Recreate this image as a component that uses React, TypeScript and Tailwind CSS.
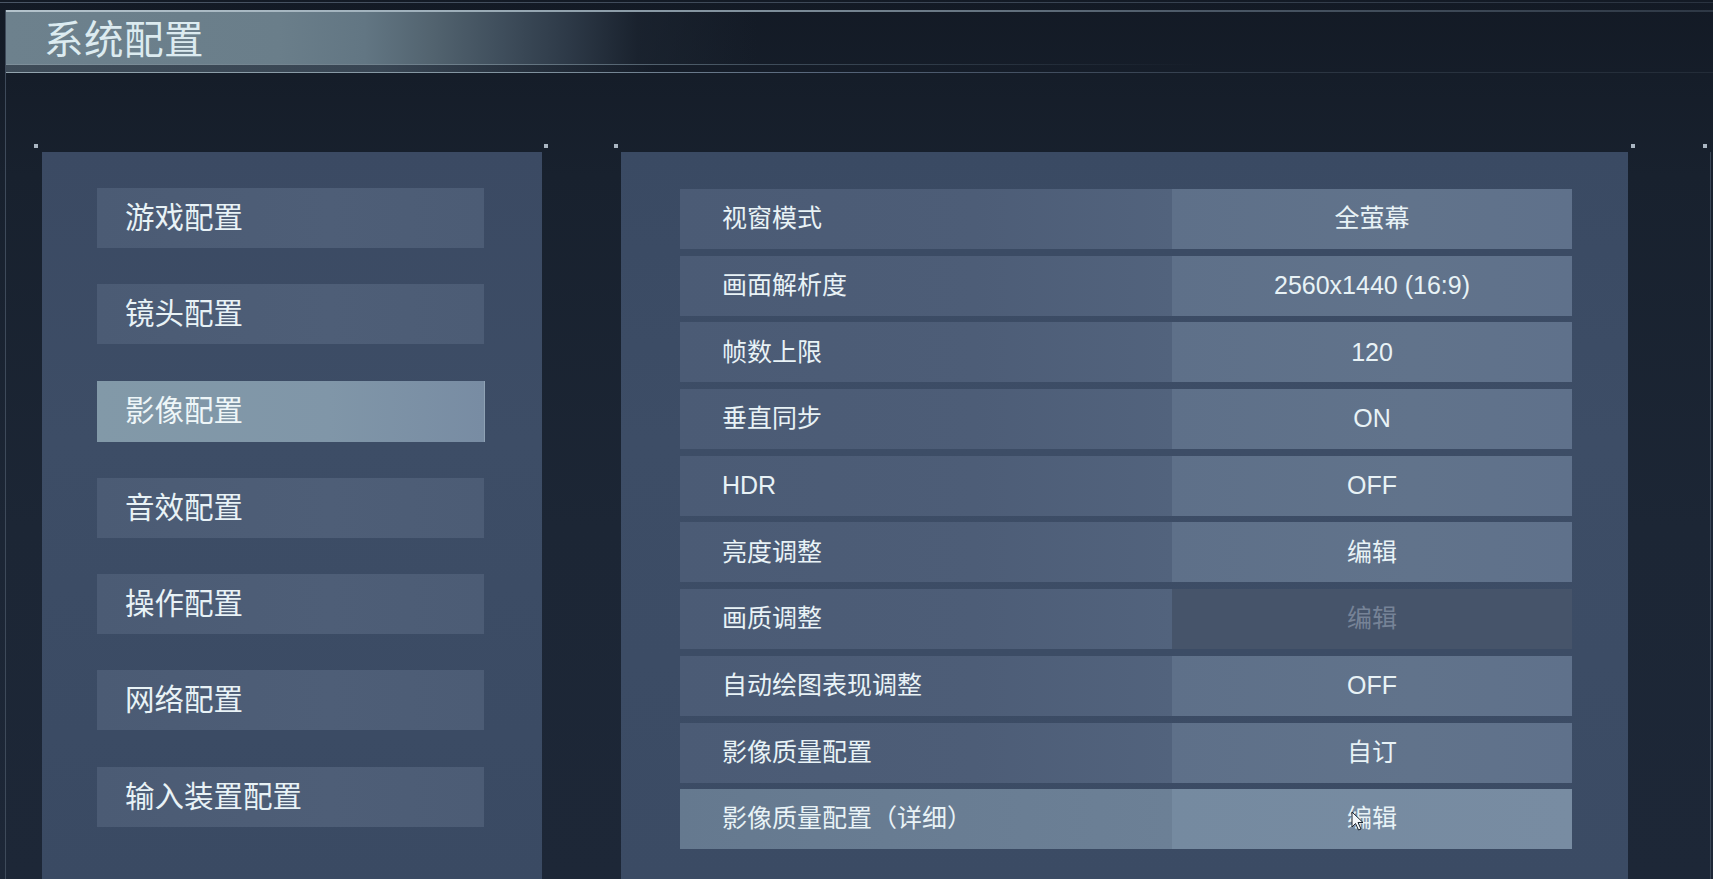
import React from 'react'

const menu = ['游戏配置', '镜头配置', '影像配置', '音效配置', '操作配置', '网络配置', '输入装置配置']
const selectedMenu = 2

type Row = { label: string; value: string; disabled?: boolean; hover?: boolean }

const rows: Row[] = [
  { label: '视窗模式', value: '全萤幕' },
  { label: '画面解析度', value: '2560x1440 (16:9)' },
  { label: '帧数上限', value: '120' },
  { label: '垂直同步', value: 'ON' },
  { label: 'HDR', value: 'OFF' },
  { label: '亮度调整', value: '编辑' },
  { label: '画质调整', value: '编辑', disabled: true },
  { label: '自动绘图表现调整', value: 'OFF' },
  { label: '影像质量配置', value: '自订' },
  { label: '影像质量配置（详细）', value: '编辑', hover: true },
]

const font = { fontFamily: '"Liberation Sans", "Noto Sans CJK SC", sans-serif' }

function Dot({ left }: { left: string }) {
  return <div className={`absolute top-[144px] h-[4px] w-[4px] bg-[#aab6c2] ${left}`} />
}

function Cursor() {
  return (
    <svg
      className="absolute left-[1351px] top-[811px]"
      width="14"
      height="22"
      viewBox="0 0 14 22"
    >
      <path d="M1 1 L1 16 L4.5 12.5 L7.5 19 L10 18 L7 11.5 L12 11.5 Z" fill="#f4f7fa" stroke="#1a222c" strokeWidth="1" />
    </svg>
  )
}

export default function App() {
  return (
    <div
      className="relative flex h-[879px] w-[1713px] flex-col overflow-hidden bg-[linear-gradient(180deg,#131a25_0%,#18212e_20%,#1c2635_60%,#1d2737_100%)] text-[#e8f2f6]"
      style={font}
    >
      <div className="mt-[2px] h-px bg-[linear-gradient(90deg,#4a5666,#3a4554_60%,#2a3340)]" />

      <div className="ml-[5px] mt-[7px] flex flex-1 flex-col border-l border-[#3e4a5a]">
        {/* title bar */}
        <header className="flex h-[63px] flex-col">
          <div className="h-[2px] bg-[linear-gradient(90deg,#b4c3cc_0%,#9fb0bb_25%,#7d8d99_45%,#4b5866_70%,#2e3845_100%)]" />
          <div className="flex flex-1 items-center pl-[38px] pt-[6px] bg-[linear-gradient(90deg,#6d818d_0%,#6a7e8a_16%,#627683_21%,#52636f_25%,#3f4e5c_29%,#2d3947_33%,rgba(28,37,49,0.7)_37%,rgba(20,27,37,0)_44%)]">
            <h1 className="text-[39.5px] leading-none tracking-[0.5px] text-[#dcebf0]">系统配置</h1>
          </div>
          <div className="h-px bg-[linear-gradient(90deg,#7e8f9a_0%,#6c7d89_28%,#3e4c5a_45%,rgba(32,42,54,0)_70%)]" />
          <div className="h-[7px] bg-[linear-gradient(90deg,#5a6b78_0%,#506170_22%,rgba(30,40,52,0)_38%)] opacity-60" />
          <div className="h-px bg-[linear-gradient(90deg,#93a4ae_0%,#8294a0_30%,#56657a_48%,#2c3643_75%,#232c38_100%)]" />
        </header>

        {/* panels */}
        <div className="mr-[2px] mt-[79px] flex flex-1 border-r border-[#3a4656] pl-[36px]">
          <nav className="flex w-[500px] flex-col gap-[36.3px] bg-[linear-gradient(180deg,#3b4a63_0%,#3d4d66_40%,#3a4a63_100%)] pl-[55px] pt-[36px]">
            {menu.map((m, i) => (
              <div
                key={m}
                className={
                  i === selectedMenu
                    ? 'flex h-[61px] w-[388px] items-center pl-[28px] text-[29.5px] bg-[linear-gradient(90deg,#8299a8_0%,#8096a8_60%,#788ca3_100%)] border-r border-[#8fa2b4] text-[#eef6f8]'
                    : 'flex h-[60px] w-[387px] items-center pl-[28px] text-[29.5px] bg-[linear-gradient(90deg,#4b5b74_0%,#4e5e77_60%,#4c5c75_100%)]'
                }
              >
                {m}
              </div>
            ))}
          </nav>

          <section className="ml-[79px] flex w-[1007px] flex-col gap-[6.7px] bg-[linear-gradient(180deg,#3a4a63_0%,#3d4d66_40%,#3b4b64_100%)] pl-[59px] pt-[37px]">
            {rows.map((r) => (
              <div key={r.label} className="flex h-[60px] w-[892px] text-[25px]">
                <div
                  className={
                    r.hover
                      ? 'flex w-[492px] items-center pl-[42px] bg-[linear-gradient(90deg,#65798f_0%,#6a7e94_70%,#6c8096_100%)]'
                      : 'flex w-[492px] items-center pl-[42px] bg-[linear-gradient(90deg,#4b5b75_0%,#4d5d77_60%,#52637d_100%)]'
                  }
                >
                  {r.label}
                </div>
                <div
                  className={
                    r.disabled
                      ? 'flex flex-1 items-center justify-center bg-[#46546a] text-[#768397]'
                      : r.hover
                        ? 'flex flex-1 items-center justify-center bg-[linear-gradient(90deg,#758aa0_0%,#788ca2_100%)]'
                        : 'flex flex-1 items-center justify-center bg-[linear-gradient(90deg,#5e7089_0%,#61738b_60%,#5f718b_100%)]'
                  }
                >
                  {r.value}
                </div>
              </div>
            ))}
          </section>
        </div>
      </div>

      <Dot left="left-[34px]" />
      <Dot left="left-[544px]" />
      <Dot left="left-[614px]" />
      <Dot left="left-[1631px]" />
      <Dot left="left-[1703px]" />
      <Cursor />
    </div>
  )
}
